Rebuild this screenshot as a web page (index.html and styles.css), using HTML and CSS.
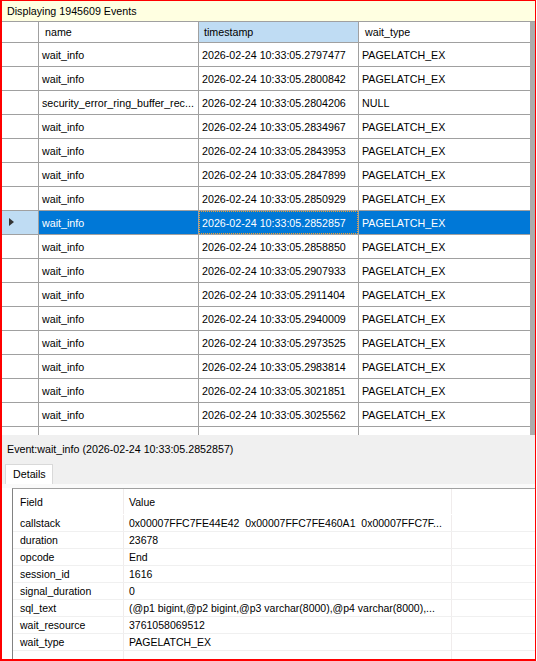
FILE: index.html
```html
<!DOCTYPE html>
<html>
<head>
<meta charset="utf-8">
<link rel="stylesheet" href="styles.css">
</head>
<body>
<div class="frame">
  <div class="title">Displaying 1945609 Events</div>
  <div class="grid">
    <div class="row head">
      <div class="c rh"></div>
      <div class="c name">name</div>
      <div class="c ts sorted">timestamp</div>
      <div class="c wt">wait_type</div>
      <div class="thumb"></div>
    </div>
    <div class="row"><div class="c rh"></div><div class="c name">wait_info</div><div class="c ts">2026-02-24 10:33:05.2797477</div><div class="c wt">PAGELATCH_EX</div><div class="thumb"></div></div>
    <div class="row"><div class="c rh"></div><div class="c name">wait_info</div><div class="c ts">2026-02-24 10:33:05.2800842</div><div class="c wt">PAGELATCH_EX</div><div class="thumb"></div></div>
    <div class="row"><div class="c rh"></div><div class="c name">security_error_ring_buffer_rec...</div><div class="c ts">2026-02-24 10:33:05.2804206</div><div class="c wt">NULL</div><div class="thumb"></div></div>
    <div class="row"><div class="c rh"></div><div class="c name">wait_info</div><div class="c ts">2026-02-24 10:33:05.2834967</div><div class="c wt">PAGELATCH_EX</div><div class="thumb"></div></div>
    <div class="row"><div class="c rh"></div><div class="c name">wait_info</div><div class="c ts">2026-02-24 10:33:05.2843953</div><div class="c wt">PAGELATCH_EX</div><div class="thumb"></div></div>
    <div class="row"><div class="c rh"></div><div class="c name">wait_info</div><div class="c ts">2026-02-24 10:33:05.2847899</div><div class="c wt">PAGELATCH_EX</div><div class="thumb"></div></div>
    <div class="row"><div class="c rh"></div><div class="c name">wait_info</div><div class="c ts">2026-02-24 10:33:05.2850929</div><div class="c wt">PAGELATCH_EX</div><div class="thumb"></div></div>
    <div class="row sel"><div class="c rh"><span class="arrow"></span></div><div class="c name">wait_info</div><div class="c ts"><span class="focus">2026-02-24 10:33:05.2852857</span></div><div class="c wt">PAGELATCH_EX</div><div class="thumb"></div></div>
    <div class="row"><div class="c rh"></div><div class="c name">wait_info</div><div class="c ts">2026-02-24 10:33:05.2858850</div><div class="c wt">PAGELATCH_EX</div><div class="thumb"></div></div>
    <div class="row"><div class="c rh"></div><div class="c name">wait_info</div><div class="c ts">2026-02-24 10:33:05.2907933</div><div class="c wt">PAGELATCH_EX</div><div class="thumb"></div></div>
    <div class="row"><div class="c rh"></div><div class="c name">wait_info</div><div class="c ts">2026-02-24 10:33:05.2911404</div><div class="c wt">PAGELATCH_EX</div><div class="thumb"></div></div>
    <div class="row"><div class="c rh"></div><div class="c name">wait_info</div><div class="c ts">2026-02-24 10:33:05.2940009</div><div class="c wt">PAGELATCH_EX</div><div class="thumb"></div></div>
    <div class="row"><div class="c rh"></div><div class="c name">wait_info</div><div class="c ts">2026-02-24 10:33:05.2973525</div><div class="c wt">PAGELATCH_EX</div><div class="thumb"></div></div>
    <div class="row"><div class="c rh"></div><div class="c name">wait_info</div><div class="c ts">2026-02-24 10:33:05.2983814</div><div class="c wt">PAGELATCH_EX</div><div class="thumb"></div></div>
    <div class="row"><div class="c rh"></div><div class="c name">wait_info</div><div class="c ts">2026-02-24 10:33:05.3021851</div><div class="c wt">PAGELATCH_EX</div><div class="thumb"></div></div>
    <div class="row"><div class="c rh"></div><div class="c name">wait_info</div><div class="c ts">2026-02-24 10:33:05.3025562</div><div class="c wt">PAGELATCH_EX</div><div class="thumb"></div></div>
    <div class="row"><div class="c rh"></div><div class="c name">wait_info</div><div class="c ts">2026-02-24 10:33:05.3030560</div><div class="c wt">PAGELATCH_EX</div><div class="thumb"></div></div>
  </div>
  <div class="panel">
    <div class="event">Event:wait_info (2026-02-24 10:33:05.2852857)</div>
    <div class="tabs"><div class="tab">Details</div></div>
  </div>
  <div class="page">
    <div class="props">
      <div class="prow phead"><div class="pf">Field</div><div class="pv">Value</div><div class="px"></div></div>
      <div class="prow"><div class="pf">callstack</div><div class="pv">0x00007FFC7FE44E42&nbsp; 0x00007FFC7FE460A1&nbsp; 0x00007FFC7F...</div><div class="px"></div></div>
      <div class="prow"><div class="pf">duration</div><div class="pv">23678</div><div class="px"></div></div>
      <div class="prow"><div class="pf">opcode</div><div class="pv">End</div><div class="px"></div></div>
      <div class="prow"><div class="pf">session_id</div><div class="pv">1616</div><div class="px"></div></div>
      <div class="prow"><div class="pf">signal_duration</div><div class="pv">0</div><div class="px"></div></div>
      <div class="prow"><div class="pf">sql_text</div><div class="pv">(@p1 bigint,@p2 bigint,@p3 varchar(8000),@p4 varchar(8000),...</div><div class="px"></div></div>
      <div class="prow"><div class="pf">wait_resource</div><div class="pv">3761058069512</div><div class="px"></div></div>
      <div class="prow"><div class="pf">wait_type</div><div class="pv">PAGELATCH_EX</div><div class="px"></div></div>
      <div class="prow last"><div class="pf"></div><div class="pv"></div><div class="px"></div></div>
    </div>
  </div>
</div>
</body>
</html>
```

FILE: styles.css
```css
html, body {
  margin: 0;
  padding: 0;
  background: #ffffff;
}
.frame {
  width: 533px;
  height: 658px;
  border-left: 2px solid #ff0000;
  border-right: 1px solid #ff0000;
  border-top: 1px solid #ff0000;
  border-bottom: 2px solid #ff0000;
  display: flex;
  flex-direction: column;
  font-family: "Liberation Sans", Arial, sans-serif;
  font-size: 10.7px;
  color: #000;
  overflow: hidden;
}
.title {
  height: 20px;
  flex: none;
  background: #ffffe1;
  padding-left: 5px;
  line-height: 20px;
}
.grid {
  height: 414px;
  flex: none;
  overflow: hidden;
  border-top: 1px solid #a0a0a0;
  box-sizing: border-box;
  background: #ffffff;
}
.row {
  display: flex;
  height: 24px;
}
.row.head {
  height: 21px;
}
.c {
  box-sizing: border-box;
  border-right: 1px solid #a0a0a0;
  border-bottom: 1px solid #a0a0a0;
  white-space: nowrap;
  overflow: hidden;
  display: flex;
  align-items: center;
  padding-left: 3px;
}
.rh { width: 37px; position: relative; }
.name { width: 160px; }
.ts { width: 160px; }
.wt { width: 171px; border-right: none; }
.head .c { padding-left: 6px; }
.head .ts { padding-left: 5px; }
.head .sorted { background: #bfdcf3; }
.thumb {
  width: 5px;
  flex: none;
  background: #acacac;
}
.sel .c { background: #0078d7; color: #ffffff; }
.sel .rh { background: #bfdcf3; }
.sel .ts { padding-left: 0; }
.focus {
  display: flex;
  align-items: center;
  height: 100%;
  width: 100%;
  box-sizing: border-box;
  padding-left: 2px;
  border: 1px dotted #f0a030;
}
.arrow {
  position: absolute;
  left: 7px;
  top: 7px;
  width: 0;
  height: 0;
  border-top: 4px solid transparent;
  border-bottom: 4px solid transparent;
  border-left: 5px solid #333333;
}
.panel {
  flex: none;
  height: 49px;
  background: #f0f0f0;
  display: flex;
  flex-direction: column;
}
.event {
  padding-left: 5px;
  height: 29px;
  line-height: 29px;
}
.tabs {
  display: flex;
  padding-left: 3px;
  height: 20px;
}
.tab {
  box-sizing: border-box;
  width: 48px;
  border: 1px solid #d9d9d9;
  border-bottom: none;
  background: #ffffff;
  padding-left: 7px;
  line-height: 19px;
}
.page {
  flex: 1;
  background: #ffffff;
  border-top: 4px solid #fafafa;
  display: flex;
  flex-direction: column;
}
.props {
  flex: 1;
  margin-left: 10px;
  border-top: 1px solid #a0a0a0;
  border-left: 1px solid #828282;
  font-size: 10.5px;
  overflow: hidden;
}
.prow {
  display: flex;
  height: 17px;
  box-sizing: border-box;
  border-bottom: 1px solid #f0f0f0;
}
.prow.phead { height: 26px; border-bottom: 1px solid #ffffff; }
.prow.last { border-bottom: none; }
.pf, .pv, .px {
  box-sizing: border-box;
  display: flex;
  align-items: center;
  white-space: nowrap;
  overflow: hidden;
  border-right: 1px solid #f0ecec;
}
.pf { width: 111px; padding-left: 7px; }
.pv { width: 328px; padding-left: 5px; }
.px { flex: 1; border-right: none; }
```
